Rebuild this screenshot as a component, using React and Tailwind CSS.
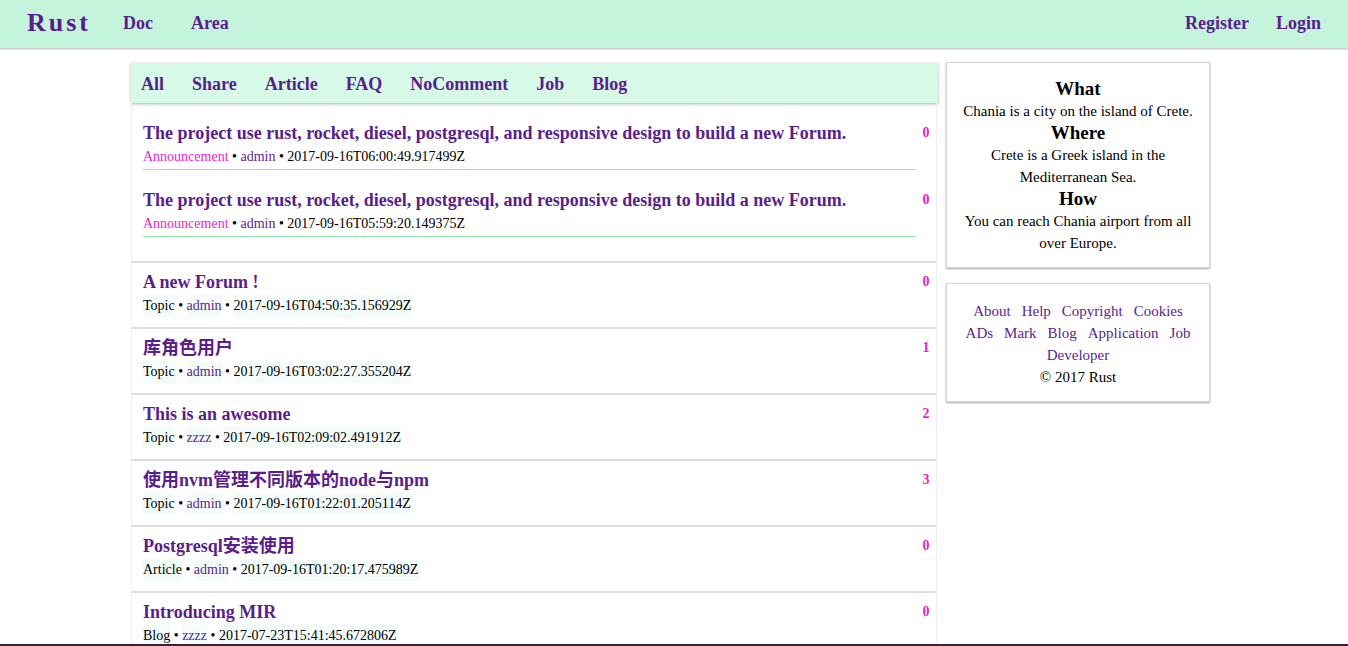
import React from "react";

const announcements = [
  { title: "The project use rust, rocket, diesel, postgresql, and responsive design to build a new Forum.", date: "2017-09-16T06:00:49.917499Z", count: 0 },
  { title: "The project use rust, rocket, diesel, postgresql, and responsive design to build a new Forum.", date: "2017-09-16T05:59:20.149375Z", count: 0 },
];

const topics = [
  { title: "A new Forum !", kind: "Topic", user: "admin", date: "2017-09-16T04:50:35.156929Z", count: 0 },
  { title: "库角色用户", kind: "Topic", user: "admin", date: "2017-09-16T03:02:27.355204Z", count: 1 },
  { title: "This is an awesome", kind: "Topic", user: "zzzz", date: "2017-09-16T02:09:02.491912Z", count: 2 },
  { title: "使用nvm管理不同版本的node与npm", kind: "Topic", user: "admin", date: "2017-09-16T01:22:01.205114Z", count: 3 },
  { title: "Postgresql安装使用", kind: "Article", user: "admin", date: "2017-09-16T01:20:17.475989Z", count: 0 },
  { title: "Introducing MIR", kind: "Blog", user: "zzzz", date: "2017-07-23T15:41:45.672806Z", count: 0 },
];

const tabs = ["All", "Share", "Article", "FAQ", "NoComment", "Job", "Blog"];
const footerLinks = ["About", "Help", "Copyright", "Cookies", "ADs", "Mark", "Blog", "Application", "Job", "Developer"];

function Meta({ kind, user, date, hot }) {
  return (
    <div className="leading-[24px] text-[14px]">
      <span className={hot ? "text-[#ea1ecb]" : "inline-block leading-[22px] bg-[#f3fcfa] text-black"}>{kind}</span>
      {" • "}
      <span className={hot ? "text-[#5a2590]" : "inline-block leading-[22px] bg-[#f3fcfa] text-[#5a2590]"}>{user}</span>
      {" • "}
      <span className={hot ? "text-black" : "inline-block leading-[22px] bg-[#f3fcfa] text-black"}>{date}</span>
    </div>
  );
}

export default function App() {
  return (
    <div className="min-h-screen bg-white font-['Liberation_Serif','Noto_Sans_CJK_SC',serif] text-black">
      {/* top bar */}
      <header className="h-[48px] bg-[#c5f4dd] shadow-[0_1px_2px_rgba(0,0,0,0.3)] flex items-center px-[27px] pb-[2px] text-[#5a1e8c] font-bold">
        <span className="text-[26px] tracking-[3px] leading-none">Rust</span>
        <a className="ml-[32px] text-[18px]">Doc</a>
        <a className="ml-[38px] text-[18px]">Area</a>
        <div className="ml-auto flex gap-[27px] text-[18px]">
          <a>Register</a>
          <a>Login</a>
        </div>
      </header>

      <div className="w-[1086px] mx-auto pt-[14px] flex gap-[8px]">
        {/* left column */}
        <div className="w-[807px]">
          <nav className="mt-[1px] h-[40px] bg-[#d6f9e8] shadow-[0_1px_3px_rgba(0,0,0,0.3)] flex items-center pl-[10px] pt-[2px] gap-[28px] text-[18px] font-bold text-[#5a1e8c]">
            {tabs.map((t) => (
              <a key={t}>{t}</a>
            ))}
          </nav>

          <div className="w-[806px] border-x border-[#eeeeee] border-b-2 border-b-[#dddddd] pb-[24px]">
            {announcements.map((a, i) => (
              <div key={i} className="flex pt-[18px] pl-[11px]">
                <div className="flex-1 border-b border-[#90e6aa]">
                  <div className="text-[18px] font-bold leading-[24px] text-[#5a1e8c]">{a.title}</div>
                  <Meta kind="Announcement" user="admin" date={a.date} hot />
                </div>
                <div className="w-[20px] text-center text-[14px] font-bold text-[#e91ec9] leading-[24px]">{a.count}</div>
              </div>
            ))}
          </div>

          {topics.map((t, i) => (
            <div key={i} className="w-[806px] flex pt-[7px] pb-[9px] pl-[11px] border-x border-[#eeeeee] border-b-2 border-b-[#dddddd]">
              <div className="flex-1">
                <div className="text-[18px] font-bold leading-[24px] text-[#5a1e8c]">{t.title}</div>
                <Meta kind={t.kind} user={t.user} date={t.date} />
              </div>
              <div className="w-[20px] text-center text-[14px] font-bold text-[#e91ec9] leading-[24px]">{t.count}</div>
            </div>
          ))}
        </div>

        {/* right column */}
        <div className="w-[264px] flex flex-col gap-[15px]">
          <div className="border border-[#d4d4d4] shadow-[0_1px_2px_rgba(0,0,0,0.35)] px-[12px] pt-[15px] pb-[13px] text-center text-[15px] leading-[22px]">
            <div className="text-[19px] font-bold">What</div>
            <p>Chania is a city on the island of Crete.</p>
            <div className="text-[19px] font-bold">Where</div>
            <p>Crete is a Greek island in the Mediterranean Sea.</p>
            <div className="text-[19px] font-bold">How</div>
            <p>You can reach Chania airport from all over Europe.</p>
          </div>

          <div className="border border-[#d4d4d4] shadow-[0_1px_2px_rgba(0,0,0,0.35)] px-[12px] pt-[16px] pb-[13px] text-center text-[15px] leading-[22px]">
            <div className="flex flex-wrap justify-center gap-x-[11px] text-[#5a2590]">
              {footerLinks.map((l) => (
                <a key={l}>{l}</a>
              ))}
            </div>
            <div>© 2017 Rust</div>
          </div>
        </div>
      </div>

      <div className="fixed bottom-0 left-0 right-0 h-[2px] bg-[#3b2133]" />
    </div>
  );
}
